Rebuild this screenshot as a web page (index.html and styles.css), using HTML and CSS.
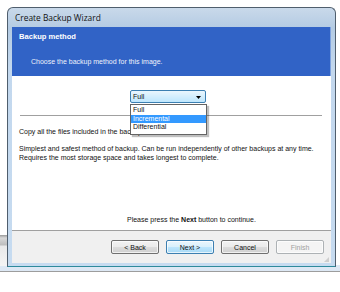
FILE: index.html
```html
<!DOCTYPE html>
<html lang="en">
<head>
    <meta charset="UTF-8">
    <title>Create Backup Wizard</title>
    <link rel="stylesheet" href="styles.css">
</head>
<body>
    <div class="window">
        <!-- Title bar -->
        <div class="titlebar">Create Backup Wizard</div>

        <div class="client">
            <!-- Blue header -->
            <div class="header">
                <h1>Backup method</h1>
                <p>Choose the backup method for this image.</p>
            </div>

            <!-- Page content -->
            <div class="content">
                <div class="combo-row">
                    <div class="combo">
                        <span>Full</span>
                        <svg class="arrow" width="5" height="3" viewBox="0 0 5 3"><path d="M0 0h5L2.5 3z" fill="#000"/></svg>
                        <ul class="combo-list">
                            <li>Full</li>
                            <li class="selected">Incremental</li>
                            <li>Differential</li>
                        </ul>
                    </div>
                </div>
                <div class="rule"></div>
                <p class="summary">Copy all the files included in the backup.</p>
                <p class="details">Simplest and safest method of backup. Can be run independently of other backups at any time. Requires the most storage space and takes longest to complete.</p>
                <p class="hint">Please press the <b>Next</b> button to continue.</p>
            </div>

            <!-- Button bar -->
            <div class="buttons">
                <button class="btn">&lt; Back</button>
                <button class="btn default">Next &gt;</button>
                <button class="btn">Cancel</button>
                <button class="btn" disabled>Finish</button>
                <span class="grip"></span>
            </div>
        </div>
    </div>
</body>
</html>
```

FILE: styles.css
```css
/* Reset */
* {
    box-sizing: border-box;
    margin: 0;
    padding: 0;
}

/* Desktop behind the dialog */
body {
    font-family: 'Liberation Sans', Arial, sans-serif;
    font-size: 7px;
    color: #111;
    width: 340px;
    height: 292px;
    overflow: hidden;
    background:
        linear-gradient(to bottom, #9a9a9a 0, #d8d8d8 3px, #bdbdbd 10px, #e9e9e9 11px, #f4f4f4 30px) 0 235px / 8px 31px no-repeat,
        linear-gradient(to bottom, transparent 265px, #dde8f4 265px, #dde8f4 271px, #9d9d9d 271px, #9d9d9d 272px, #fff 272px);
    padding: 7px 0 0 7px;
}

/* Window frame */
.window {
    width: 329px;
    height: 260px;
    border: 1px solid #4f5e6d;
    border-bottom: 1px solid #2d8a9c;
    border-radius: 6px 6px 0 0;
    background: linear-gradient(to bottom, #c9d9ea 0, #b4cbe3 20px, #c3d8ee 60px, #c6dbf0 100%);
    padding: 0 4px 3px 4px;
    display: flex;
    flex-direction: column;
}

.titlebar {
    height: 19px;
    line-height: 20px;
    padding-left: 3px;
    font-size: 8.4px;
    color: #111;
    font-family: 'Open Sans', 'Liberation Sans', sans-serif;
}

.client {
    flex: 1;
    display: flex;
    flex-direction: column;
    background: #f0f0f0;
}

/* Header */
.header {
    height: 49px;
    background: #3163c6;
    border-right: 1px solid #7fa4e0;
    color: #fff;
    padding: 5px 7px 0;
}

.header h1 {
    font-size: 7.6px;
    font-weight: bold;
    line-height: 9px;
}

.header p {
    margin: 16px 0 0 12px;
    line-height: 9px;
    color: #eef2fb;
}

/* Content */
.content {
    height: 155px;
    background: #fff;
    border-bottom: 1px solid #a0a0a0;
    display: flex;
    flex-direction: column;
    padding: 14px 0 6px;
}

.combo-row {
    padding-left: 118px;
    height: 13px;
}

.combo {
    position: relative;
    width: 76px;
    height: 13px;
    border: 1px solid #3c7fb1;
    border-radius: 2px;
    background: linear-gradient(to bottom, #eaf6fd, #bee6fd);
    display: flex;
    align-items: center;
    padding-left: 2px;
    line-height: 11px;
}

.arrow {
    position: absolute;
    right: 4px;
    top: 5px;
}

.combo-list {
    position: absolute;
    left: -1px;
    top: 13px;
    width: 77px;
    list-style: none;
    background: #fff;
    border: 1px solid #646464;
    box-shadow: 2px 2px 1px rgba(0, 0, 0, 0.25);
    padding: 1px 0 2px;
    z-index: 2;
}

.combo-list li {
    height: 8.5px;
    line-height: 8.5px;
    padding-left: 2px;
}

.combo-list .selected {
    background: #3399ff;
    color: #fff;
}

.rule {
    margin: 12px 9px 0 8px;
    border-top: 1px solid #a0a0a0;
}

.summary {
    margin: 11px 0 0 7px;
    line-height: 9px;
}

.details {
    margin: 9px 4px 0 7px;
    line-height: 8.5px;
}

.hint {
    margin-top: auto;
    padding-left: 115px;
    line-height: 9px;
}

/* Buttons */
.buttons {
    position: relative;
    flex: 1;
    display: flex;
    justify-content: flex-end;
    align-items: flex-start;
    gap: 7px;
    padding: 9px 7px 0 0;
}

.btn {
    width: 48px;
    height: 14px;
    font-family: inherit;
    font-size: 7px;
    color: #111;
    border: 1px solid #707070;
    border-radius: 2px;
    background: linear-gradient(to bottom, #f2f2f2 0, #ebebeb 50%, #dddddd 51%, #cfcfcf 100%);
    box-shadow: inset 0 0 0 1px rgba(255, 255, 255, 0.7);
}

.btn.default {
    border-color: #3c7fb1;
    background: linear-gradient(to bottom, #eaf6fd 0, #d9f0fc 50%, #bee6fd 51%, #a7d9f5 100%);
}

.btn:disabled {
    border-color: #adb2b5;
    background: #f4f4f4;
    color: #a0a0a0;
}

.grip {
    position: absolute;
    right: 2px;
    bottom: 1px;
    width: 5px;
    height: 5px;
    background: radial-gradient(circle, #a6a6a6 0.6px, transparent 0.8px) 0 0 / 2px 2px;
    clip-path: polygon(100% 0, 100% 100%, 0 100%);
}
```
